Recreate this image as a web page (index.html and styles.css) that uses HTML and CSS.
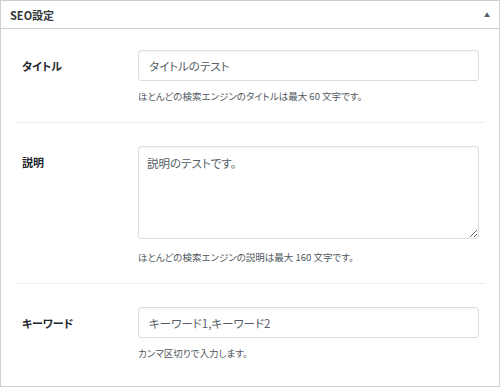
FILE: index.html
```html
<!DOCTYPE html>
<html lang="ja">

<head>
    <meta charset="UTF-8">
    <meta name="viewport" content="width=device-width, initial-scale=1.0">
    <title>SEO設定</title>
    <link rel="stylesheet" href="styles.css">
</head>

<body>

    <div class="postbox">
        <div class="hndle">
            <span class="hndle-title">SEO設定</span>
            <span class="toggle-arrow">▲</span>
        </div>

        <div class="inside">
            <div class="field">
                <label class="field-label" for="seoTitle">タイトル</label>
                <div class="field-body">
                    <input type="text" id="seoTitle" value="タイトルのテスト">
                    <p class="description">ほとんどの検索エンジンのタイトルは最大 60 文字です。</p>
                </div>
            </div>

            <div class="field">
                <label class="field-label" for="seoDesc">説明</label>
                <div class="field-body">
                    <textarea id="seoDesc">説明のテストです。</textarea>
                    <p class="description">ほとんどの検索エンジンの説明は最大 160 文字です。</p>
                </div>
            </div>

            <div class="field">
                <label class="field-label" for="seoKeywords">キーワード</label>
                <div class="field-body">
                    <input type="text" id="seoKeywords" value="キーワード1,キーワード2">
                    <p class="description">カンマ区切りで入力します。</p>
                </div>
            </div>
        </div>
    </div>

</body>

</html>
```

FILE: styles.css
```css
body {
    margin: 0;
    background-color: #f1f1f1;
    font-family: "Noto Sans CJK JP", "Noto Sans", sans-serif;
    font-feature-settings: "palt";
    color: #23282d;
}

.postbox {
    background-color: #ffffff;
    border: 1px solid #ccd0d4;
    height: 385px;
}

.hndle {
    display: flex;
    align-items: center;
    justify-content: space-between;
    height: 27px;
    padding: 0 9px 0 9px;
    border-bottom: 1px solid #ccd0d4;
}

.hndle-title {
    font-size: 11px;
    font-weight: 700;
    color: #32373c;
}

.toggle-arrow {
    font-size: 6px;
    color: #555d66;
}

.inside {
    padding: 0 14px;
}

.field {
    display: grid;
    grid-template-columns: 116px 1fr;
    padding: 23px 6px 19px 7px;
    border-bottom: 1px solid #eeeeee;
}

.field:first-child {
    padding-top: 21px;
}

.field:last-child {
    border-bottom: none;
}

.field-label {
    font-size: 11px;
    font-weight: 700;
    line-height: 14px;
    padding-top: 9px;
}

input,
textarea {
    display: block;
    box-sizing: border-box;
    width: 100%;
    margin: 0;
    font-family: inherit;
    font-feature-settings: "palt";
    font-size: 11.5px;
    color: #555d66;
    border: 1px solid #dddddd;
    border-radius: 3px;
    box-shadow: inset 0 1px 2px rgba(0, 0, 0, 0.04);
    background-color: #ffffff;
}

input {
    height: 31px;
    padding: 0 10px;
}

textarea {
    height: 93px;
    margin-bottom: 11px;
    padding: 8px 8px;
    resize: vertical;
}

.description {
    margin: 8px 0 0;
    font-size: 9.5px;
    line-height: 14px;
    color: #50575e;
}
```
